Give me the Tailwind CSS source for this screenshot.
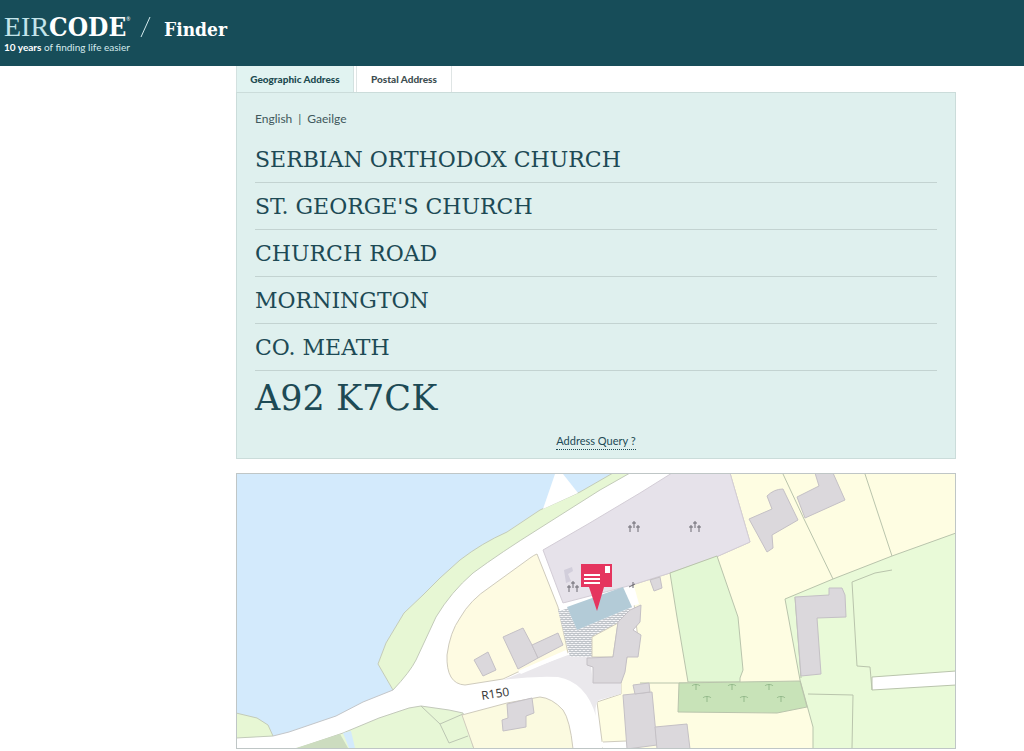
<!DOCTYPE html>
<html lang="en">
<head>
  <meta charset="UTF-8" />
  <meta name="viewport" content="width=device-width, initial-scale=1.0" />
  <title>Eircode Finder</title>
  <script src="https://cdn.jsdelivr.net/npm/@tailwindcss/browser@4"></script>
</head>
<body class="bg-white font-['Lato',sans-serif]">

<!-- Header -->
<header class="flex items-center h-[66px] px-1 bg-[#174d59] text-white">
  <a href="#" class="block w-[128px]">
    <span class="flex items-baseline h-7 leading-7">
      <span class="font-['Liberation_Serif',serif] text-[28px] text-[#c3e4ea]">EIR</span>
      <span class="font-['DejaVu_Serif_Condensed','DejaVu_Serif',serif] font-bold text-[26px]">CODE</span>
      <span class="self-start text-[5px] leading-3">®</span>
    </span>
    <span class="block text-[10px] leading-3 whitespace-nowrap text-[#d5ebee]"><b class="text-white">10 years</b> of finding life easier</span>
  </a>
  <svg class="w-3 h-6 ml-2 mb-3" viewBox="0 0 12 24"><path d="M1 22 10 2" stroke="#d5ebee" fill="none"/></svg>
  <h1 class="ml-3 mb-2 font-['DejaVu_Serif_Condensed','DejaVu_Serif',serif] font-bold text-[19px]">Finder</h1>
</header>

<main class="ml-[236px] mr-[68px]">

  <!-- Tabs -->
  <div class="flex h-[26px] text-[10px] font-black text-[#3f4f52]">
    <button class="w-[118px] bg-[#e1f3f1] border-x border-[#d3e1e0] text-[#204a50]">Geographic Address</button>
    <button class="w-[96px] ml-[2px] bg-white border-x border-[#dfe5e5]">Postal Address</button>
  </div>

  <!-- Address -->
  <section class="bg-[#dff0ee] border border-[#cbdcda] px-[18px] pt-[18px] pb-2 text-[#1d4a55]">
    <div class="flex gap-[6px] h-[25px] text-[12px] leading-4 text-[#41585c]">
      <a href="#">English</a><span>|</span><a href="#">Gaeilge</a>
    </div>
    <ul class="font-['DejaVu_Serif',serif] text-[22px]">
      <li class="h-[47px] leading-[48px] border-b border-[#c3d3d1]">SERBIAN ORTHODOX CHURCH</li>
      <li class="h-[47px] leading-[48px] border-b border-[#c3d3d1]">ST. GEORGE'S CHURCH</li>
      <li class="h-[47px] leading-[48px] border-b border-[#c3d3d1]">CHURCH ROAD</li>
      <li class="h-[47px] leading-[48px] border-b border-[#c3d3d1]">MORNINGTON</li>
      <li class="h-[47px] leading-[48px] border-b border-[#c3d3d1]">CO. MEATH</li>
    </ul>
    <p class="font-['DejaVu_Serif',serif] text-[35px] leading-[54px]">A92 K7CK</p>
    <div class="flex justify-center pt-2">
      <a href="#" class="text-[11px] leading-4 border-b border-dotted border-[#1d4a55]">Address Query ?</a>
    </div>
  </section>

  <!-- Map -->
  <section class="mt-[14px] border border-[#bfc6c6]">
    <svg class="block w-full" viewBox="237 474 718 274" role="img" aria-label="Map">
      <defs>
        <pattern id="paving" width="4" height="4" patternUnits="userSpaceOnUse">
          <rect width="4" height="4" fill="#f6f6f8"/>
          <path d="M0 1l2 1 2-1M-2 3l2 1 2-1M2 3l2 1 2-1" stroke="#adb3ba" stroke-width="1" fill="none"/>
        </pattern>
        <g id="crosses" stroke="#6d6a72" stroke-width="1" fill="none">
          <path d="M0-6v7M-2-4h4M-4-2v7M-6 0h4M4-2v7M2 0h4"/>
        </g>
        <path id="shrub" d="M-4-1c1-2 7-2 8 0M0-2v5" stroke="#93b98a" stroke-width="1" fill="none"/>
      </defs>

      <rect x="237" y="474" width="718" height="274" fill="#fff"/>

      <!-- water and shore -->
      <path fill="#d3eafc" d="M237 474H613L580 492 540 510 507 532 460 560 423 595 404 613 386 643 378 664 393 690 363 702 336 716 289 732 273 736 237 738Z"/>
      <g stroke="#c3cbb9" stroke-width="1">
        <path fill="#e7f7d4" d="M613 473 580 492 540 510 507 532 Q482 543 460 560 L440 578 423 595 404 613 386 643 378 664 393 690 Q410 672 416 660 L436 617 Q451 592 473 573 Q500 553 540 528L600 490 630 473Z"/>
        <path fill="#e7f7d4" d="M236 713 257 718 268 725 273 736 236 738Z"/>
      </g>
      <path fill="#fff" d="M543 509 555 474H563L578 493Z"/>
      <path d="M273 736 289 732 336 716 363 702 393 690" stroke="#c3c6c9" fill="none"/>

      <!-- south west fields -->
      <path fill="#e7f7d6" stroke="#c3c9bb" d="M296 749 343 733 379 718 409 708 421 706 449 710 463 713 474 749Z"/>
      <path fill="#ccdcbf" d="M296 748 340 734 348 748Z"/>
      <path fill="#d3eafc" d="M343 733 351 731 355 748H349Z"/>
      <path d="M421 706 440 724 449 743 468 736M440 724 463 714" stroke="#bcc6b3" fill="none"/>

      <!-- plots -->
      <g stroke="#cfcbbd" stroke-width="1">
        <path fill="#fefbe2" d="M537 554Q534 555 530 558L490 587Q470 600 460 618 450 632 447 655 446 684 465 685L503 679 518 672 568 653 558 607Z"/>
        <path fill="#fbfae0" d="M462 715 507 703 540 697Q552 698 563 710 570 720 573 749H474Z"/>
        <path fill="#fefde2" d="M730 473H956V749H603L597 702 621 694 621 683 627 657 638 640 632 585 670 573 716 557 750 542Z"/>
      </g>
      <path fill="#fff" d="M598 742 626 741 628 748H603Z"/>
      <path d="M603 742 626 741" stroke="#cfcbbd"/>
      <path fill="#e6e2ea" stroke="#d3cdd6" d="M543 550 588 524 640 493 672 473H730L750 542 716 557 670 573 632 585 563 603 558 590Z"/>
      <path fill="#eae8ec" d="M503 680 520 673 568 655 590 657 593 683 621 683 621 694 599 700Q594 706 596 716 586 682 558 677 530 676 503 680Z"/>
      <path fill="#fff" d="M518 671 566 650 568 654 521 674Z"/>

      <!-- east fields -->
      <g stroke="#b9c4ac" stroke-width="1">
        <path fill="#e3f8d4" d="M670 573 717 556 738 617 743 670 740 678 740 682H688L677 617Z"/>
        <path fill="#e9fad8" d="M956 533 892 556 833 579 785 599 800 680 813 727V749H956Z"/>
        <path fill="none" d="M783 474 804 519 833 579M865 474 892 556M808 694 853 695 852 748M892 570 875 573 852 582 857 666 870 667M640 683H688"/>
        <path fill="none" d="M795 597 801 678"/>
        <path fill="#fff" d="M872 677 956 671V685L872 690Z"/>
        <path fill="none" d="M870 667 872 690"/>
        <path fill="#c8e3b8" d="M679 683 800 681 807 707 777 713 678 712Z"/>
      </g>
      <use href="#shrub" x="707" y="699"/><use href="#shrub" x="744" y="699"/><use href="#shrub" x="781" y="699"/>
      <use href="#shrub" x="696" y="687"/><use href="#shrub" x="732" y="687"/><use href="#shrub" x="769" y="687"/>

      <!-- churchyard -->
      <path fill="url(#paving)" d="M558 610 567 606 577 630 632 607 618 623 592 637V657H570Z"/>
      <path fill="#fefde2" stroke="#cfcbbd" d="M592 637 618 623 613 657H592Z"/>
      <path fill="#fff" d="M625 588 634 586 639 604 632 606ZM559 605 566 603 568 608 560 611Z"/>

      <!-- buildings -->
      <g fill="#dbd8dc" stroke="#c4c0c5" stroke-width="1">
        <path d="M618 622 630 610 641 605 640 622 633 630 641 635 638 657 627 657 625 672 621 683H593V667L587 665V658L613 657Z"/>
        <path d="M749 519 772 509 767 496Q774 489 783 489L798 520 772 535 773 548 767 552Z"/>
        <path d="M797 497 819 486 815 473H833L845 500 805 518Z"/>
        <path d="M795 597 829 595V588H842L845 595 846 617 817 618 821 674 801 676Z"/>
        <path d="M474 660 488 652 496 670 483 676Z"/>
        <path d="M503 637 523 628 532 645 538 658 518 669Z"/>
        <path d="M532 645 558 633 563 645 538 658Z"/>
        <path d="M507 704 532 698 534 713 526 716V727L503 731 502 720 508 718Z"/>
        <path d="M623 695 652 692 657 745 627 749Z"/>
        <path d="M633 685 649 683 650 692 635 694Z"/>
        <path d="M655 727 687 724 690 749H657Z"/>
        <path d="M650 580 660 577 662 588 654 591Z"/>
      </g>
      <path fill="#d2cedb" d="M564 570 572 567 573 571 568 574 571 581 566 583Z"/>
      <path fill="#b3cbd7" d="M567 607 623 587 632 607 577 630Z"/>

      <use href="#crosses" x="634" y="527"/>
      <use href="#crosses" x="695" y="527"/>
      <use href="#crosses" x="573" y="587"/>
      <path d="M629 587 635 584M633 582v6" stroke="#6d6a72" fill="none"/>

      <text x="482" y="700" transform="rotate(-9 482 700)" class="font-['Noto_Sans',sans-serif] text-[12px]" fill="#3c3c3c">R150</text>

      <!-- marker -->
      <path fill="#e5355f" d="M581 564H612V587H604L597 611 589 587H581Z"/>
      <path fill="#fff" d="M605 566H610V573H605Z"/>
      <path d="M584 575H600M584 579H600M584 583H600" stroke="#fff" stroke-width="2"/>
    </svg>
  </section>

</main>
</body>
</html>
